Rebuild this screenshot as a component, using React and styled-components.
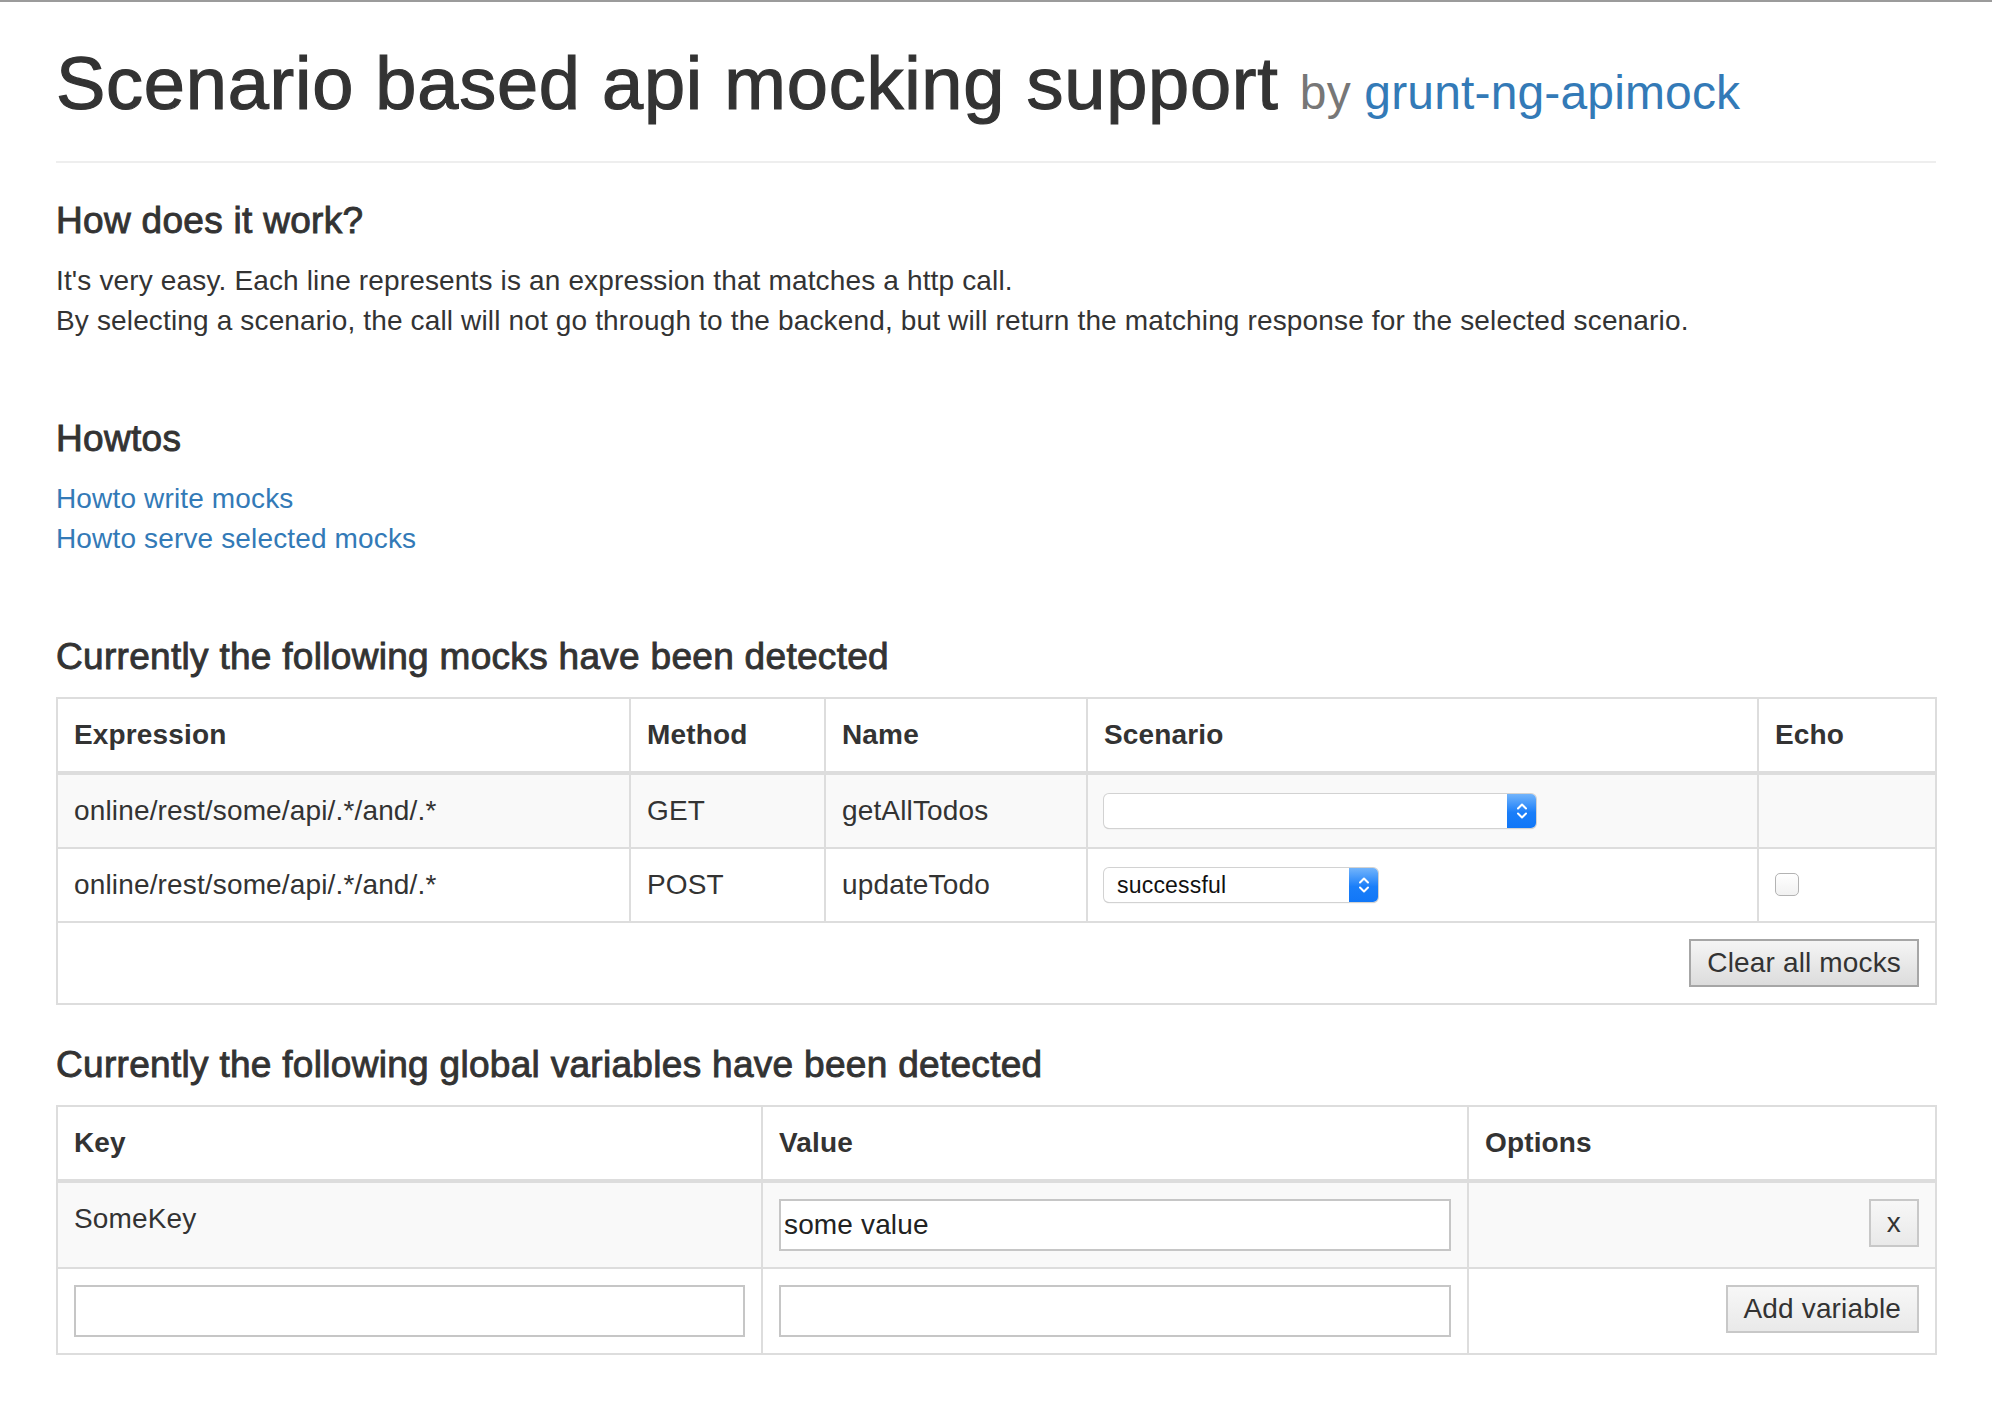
import React from 'react'
import styled, {createGlobalStyle} from "styled-components";

const GlobalStyle = createGlobalStyle`
  html, body {margin:0; padding:0; background:#fff;}
  body {
    font-family: "Liberation Sans", Arial, Helvetica, sans-serif;
    font-size:28px; line-height:40px; color:#333; letter-spacing:0.15px;
    border-top:2px solid #9b9b9b;
  }
  a {color:#337ab7; text-decoration:none;}
`

const Container = styled.div`width:1880px; margin:0 auto; padding-bottom:60px;`
const PageHeader = styled.div`padding-bottom:8px; margin-bottom:38px; border-bottom:2px solid #eee;`
const Title = styled.h1`
  margin:42px 0 20px; font-size:74px; line-height:80px; font-weight:400;
  letter-spacing:0.75px; -webkit-text-stroke:1.2px #333;
`
const Small = styled.small`font-size:48px; color:#777; letter-spacing:0.15px; -webkit-text-stroke:0;`
const Section = styled.section`margin-top:${p => p.$top || 0}px;`
const Heading = styled.h4`
  margin:0 0 20px; font-size:37px; line-height:40px; font-weight:400;
  letter-spacing:0.3px; -webkit-text-stroke:0.9px #333;
`
const Para = styled.p`margin:0;`
const LinkList = styled.div`display:flex; flex-direction:column; align-items:flex-start;`

const Table = styled.table`
  width:100%; table-layout:fixed; border-collapse:collapse;
  border:2px solid #ddd; margin-bottom:40px;
`
const Th = styled.th`
  text-align:left; font-weight:700; padding:16px; vertical-align:bottom;
  border:2px solid #ddd; border-bottom-width:4px;
`
const Row = styled.tr`background:${p => p.$striped ? "#f9f9f9" : "#fff"};`
const Td = styled.td`
  padding:16px; vertical-align:top; border:2px solid #ddd;
  text-align:${p => p.$right ? "right" : "left"};
`

const SelectBox = styled.div`
  display:inline-flex; vertical-align:middle; margin-top:-4px;
  width:${p => p.$w}px; height:34px; box-sizing:border-box;
  border-radius:5px; background:#fff; overflow:hidden;
  box-shadow:0 0 0 1px #d2d2d2, 0 1px 1px 0 rgba(0,0,0,.28);
`
const SelectText = styled.span`
  flex:1; padding-left:13px; font-size:23px; line-height:34px; color:#111; letter-spacing:0.2px;
`
const SelectArrows = styled.span`
  width:29px; display:flex; align-items:center; justify-content:center;
  background:linear-gradient(#72b4fb, #1a7ef9 55%, #1177f7);
`
const Checkbox = styled.span`
  display:inline-block; vertical-align:middle; margin-top:-4px;
  width:24px; height:23px; box-sizing:border-box;
  border:1px solid #b3b3b3; border-radius:5px;
  background:linear-gradient(#fff, #f1f1f1);
`
const Button = styled.button`
  height:48px; padding:0 16px; font-family:inherit; font-size:28px; color:#333;
  letter-spacing:0.15px;
  border:2px solid ${p => p.$strong ? "#a6a6a6" : "#c8c8c8"};
  background:${p => p.$strong ? "linear-gradient(#f5f5f5, #dcdcdc)" : "linear-gradient(#f7f7f7, #e9e9e9)"};
  cursor:pointer; vertical-align:top;
`
const Input = styled.input`
  display:block; width:100%; height:52px; box-sizing:border-box; margin:0;
  border:2px solid #c6c6c6; padding:0 3px; background:#fff;
  font-family:inherit; font-size:28px; color:#222; outline:none; letter-spacing:0.15px;
`

const Arrows = () => (
  <svg width="12" height="20" viewBox="0 0 12 20" fill="none" stroke="#fff" strokeWidth="2" strokeLinecap="round" strokeLinejoin="round">
    <path d="M2 7.5 L6 3.5 L10 7.5"/>
    <path d="M2 12.5 L6 16.5 L10 12.5"/>
  </svg>
)

const Select = ({width, value}) => (
  <SelectBox $w={width}>
    <SelectText>{value}</SelectText>
    <SelectArrows><Arrows/></SelectArrows>
  </SelectBox>
)

const mocks = [
  {expression: "online/rest/some/api/.*/and/.*", method: "GET", name: "getAllTodos", scenario: "", width: 432, echo: false},
  {expression: "online/rest/some/api/.*/and/.*", method: "POST", name: "updateTodo", scenario: "successful", width: 274, echo: true},
]

const App = () => {
  return (
    <Container>
      <GlobalStyle/>
      <PageHeader>
        <Title>Scenario based api mocking support <Small>by <a href="#">grunt-ng-apimock</a></Small></Title>
      </PageHeader>

      <Section>
        <Heading>How does it work?</Heading>
        <Para>
          It's very easy. Each line represents is an expression that matches a http call.<br/>
          By selecting a scenario, the call will not go through to the backend, but will return the matching response for the selected scenario.
        </Para>
      </Section>

      <Section $top={78}>
        <Heading>Howtos</Heading>
        <LinkList>
          <a href="#">Howto write mocks</a>
          <a href="#">Howto serve selected mocks</a>
        </LinkList>
      </Section>

      <Section $top={78}>
        <Heading>Currently the following mocks have been detected</Heading>
        <Table>
          <colgroup>
            <col style={{width: 573}}/><col style={{width: 195}}/><col style={{width: 262}}/><col style={{width: 671}}/><col style={{width: 178}}/>
          </colgroup>
          <thead>
            <tr><Th>Expression</Th><Th>Method</Th><Th>Name</Th><Th>Scenario</Th><Th>Echo</Th></tr>
          </thead>
          <tbody>
            {mocks.map((m, i) => (
              <Row key={i} $striped={i % 2 === 0}>
                <Td>{m.expression}</Td>
                <Td>{m.method}</Td>
                <Td>{m.name}</Td>
                <Td><Select width={m.width} value={m.scenario}/></Td>
                <Td>{m.echo && <Checkbox/>}</Td>
              </Row>
            ))}
            <Row>
              <Td colSpan={5} $right><Button $strong>Clear all mocks</Button></Td>
            </Row>
          </tbody>
        </Table>
      </Section>

      <Section>
        <Heading>Currently the following global variables have been detected</Heading>
        <Table>
          <colgroup>
            <col style={{width: 705}}/><col style={{width: 706}}/><col style={{width: 468}}/>
          </colgroup>
          <thead>
            <tr><Th>Key</Th><Th>Value</Th><Th>Options</Th></tr>
          </thead>
          <tbody>
            <Row $striped>
              <Td>SomeKey</Td>
              <Td><Input defaultValue="some value"/></Td>
              <Td $right><Button>x</Button></Td>
            </Row>
            <Row>
              <Td><Input/></Td>
              <Td><Input/></Td>
              <Td $right><Button>Add variable</Button></Td>
            </Row>
          </tbody>
        </Table>
      </Section>
    </Container>
  );
};

export default App;
